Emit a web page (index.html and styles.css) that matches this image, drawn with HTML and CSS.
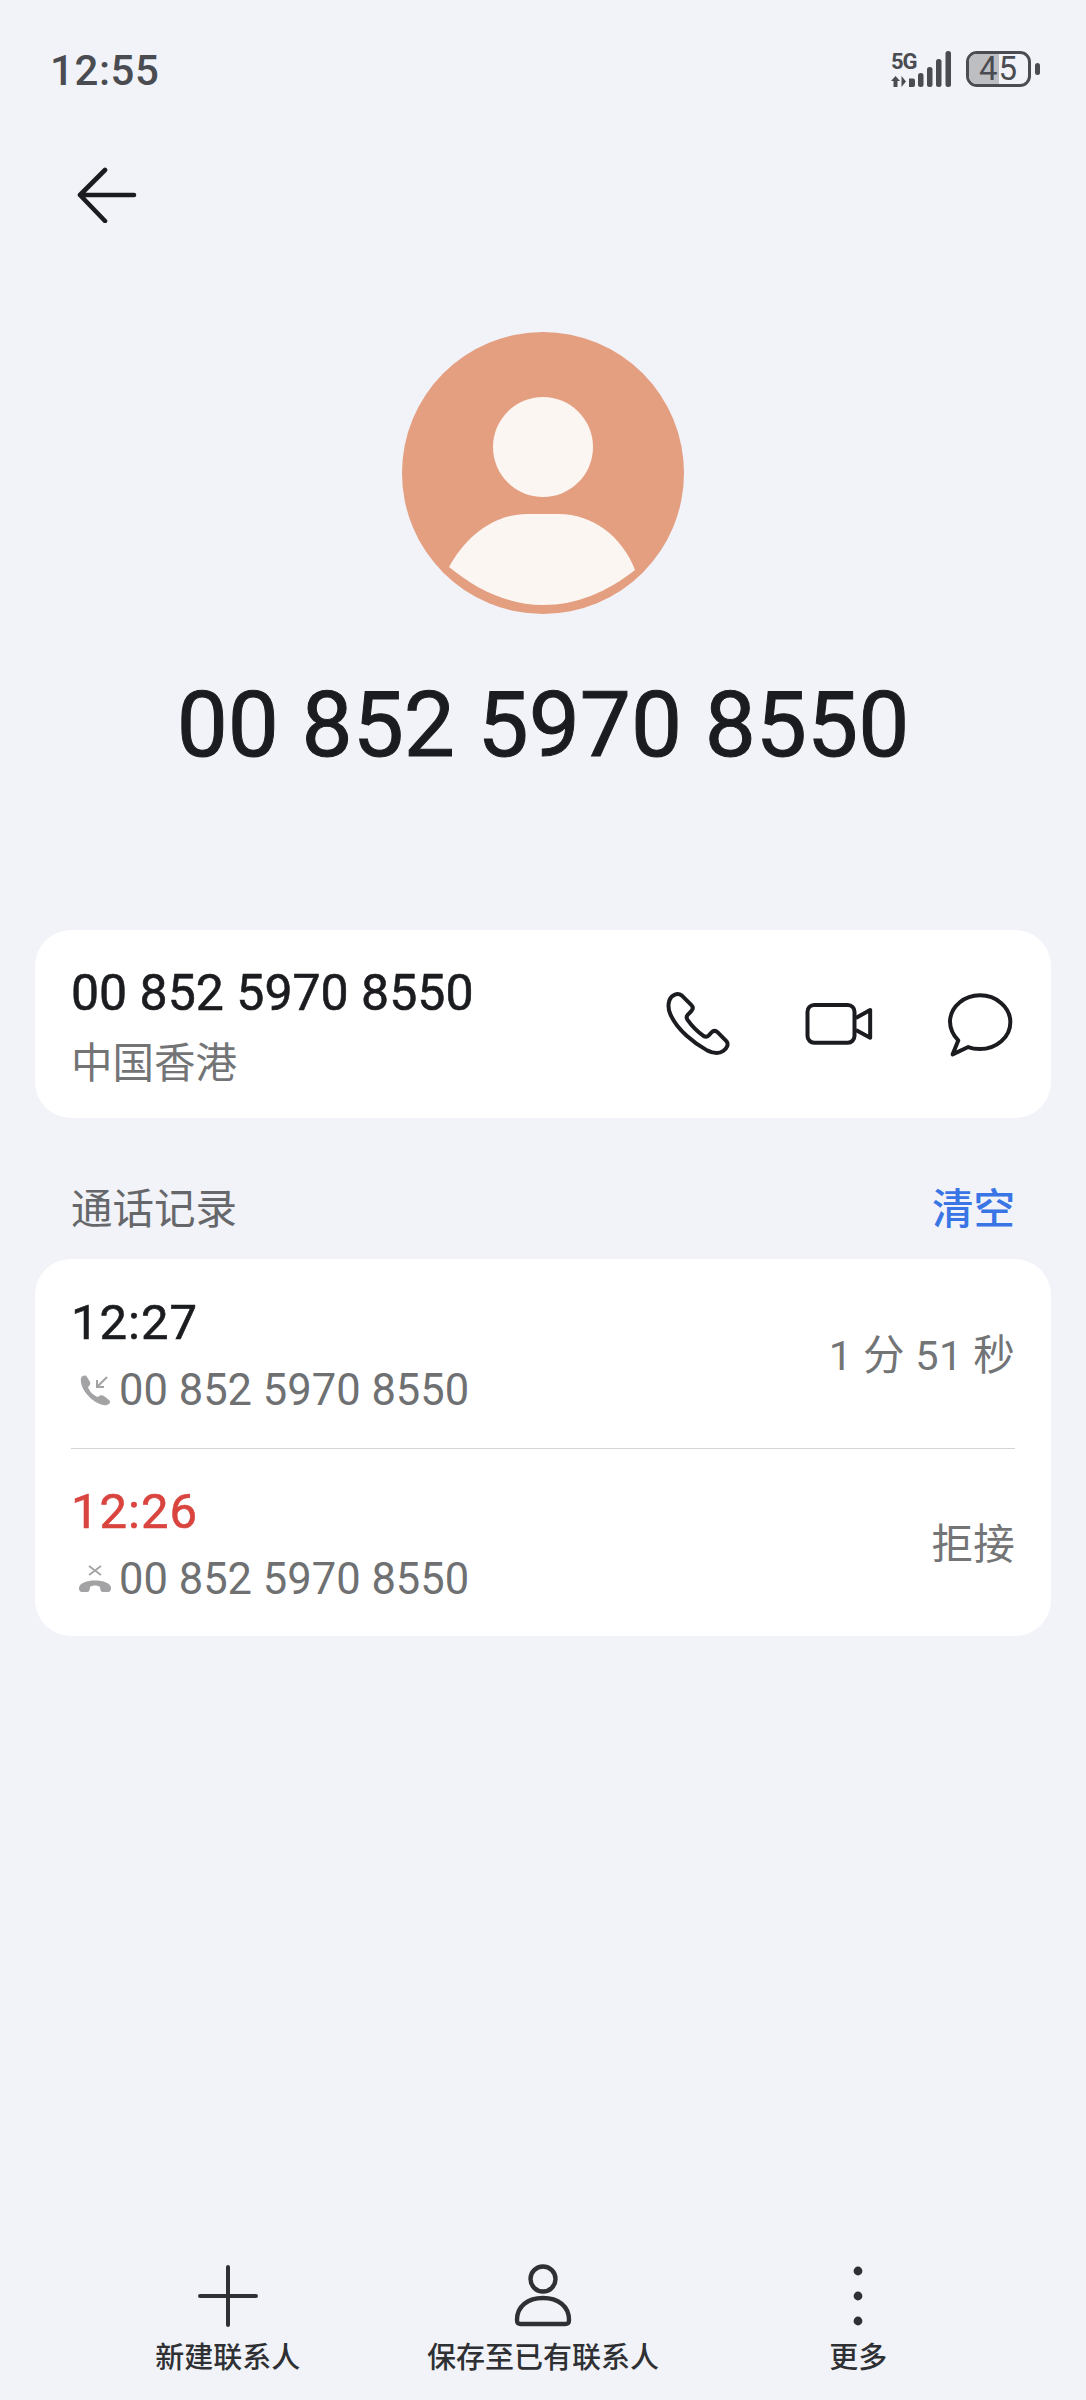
FILE: index.html
```html
<!DOCTYPE html>
<html lang="zh-CN">
<head>
<meta charset="utf-8">
<title>通话详情</title>
<link rel="stylesheet" href="styles.css">
</head>
<body>
<div class="page">
  <div class="status">
    <span class="clock">12:55</span>
    <div class="status-icons">
      <div class="net">
        <span class="net-label">5G</span>
        <svg class="net-arrows" viewBox="0 0 24 11"><path d="M4.5 0 L9 5 H6.5 V11 H2.5 V5 H0Z M10.5 0 L15 5.5 L10.5 11Z M18 2.5 h4 q2 0 2 2 v4.5 q0 2 -2 2 h-4z" fill="#4a4c51"/></svg>
      </div>
      <svg class="bars" viewBox="0 0 33 36"><g fill="#4a4c51"><rect x="0" y="22" width="5.5" height="14" rx="2.5"/><rect x="9" y="16" width="5.5" height="20" rx="2.5"/><rect x="18" y="8" width="5.5" height="28" rx="2.5"/><rect x="27.5" y="0" width="5.5" height="36" rx="2.5"/></g></svg>
      <div class="battery"><span class="battery-level"></span><span class="battery-text">45</span></div>
      <span class="battery-cap"></span>
    </div>
  </div>

  <div class="nav">
    <svg class="back" viewBox="0 0 60 56" fill="none" stroke="#1b1c1f" stroke-width="4.6" stroke-linecap="round" stroke-linejoin="round"><path d="M28 3 L3 28 L28 54 M3 28 H57"/></svg>
  </div>

  <div class="hero">
    <svg class="avatar" viewBox="0 0 282 282">
      <circle cx="141" cy="141" r="141" fill="#e49e80"/>
      <circle cx="141" cy="115" r="50" fill="#fbf6f2"/>
      <path d="M47 235 C64 204 92 182 125 182 H157 C190 182 220 204 233 238 C205 260 175 273 141 273 C107 273 75 258 47 235Z" fill="#fbf6f2"/>
    </svg>
    <h1 class="title">00 852 5970 8550</h1>
  </div>

  <section class="card contact">
    <div class="contact-text">
      <div class="contact-number">00 852 5970 8550</div>
      <div class="contact-region">中国香港</div>
    </div>
    <div class="actions">
      <svg class="act act-phone" viewBox="70 90 205 205" fill="none" stroke="#1b1c1f" stroke-width="12" stroke-linejoin="round"><path d="M86 122 C92 103 112 97 124 107 L152 135 C158 141 158 148 152 154 L142 164 C137 169 137 174 141 180 C155 200 170 215 190 229 C196 232 200 232 205 227 L213 218 C219 212 226 212 232 218 L258 244 C266 254 260 266 248 274 C235 284 220 282 200 272 C160 250 110 210 90 165 C83 150 82 135 86 122Z"/></svg>
      <svg class="act act-video" viewBox="490 124 215 138" fill="none" stroke="#1b1c1f" stroke-width="12" stroke-linejoin="round"><rect x="503" y="136" width="141" height="113" rx="20"/><path d="M648 175 L691 151 V234 L648 211"/></svg>
      <svg class="act act-chat" viewBox="918 92 205 200" fill="none" stroke="#1b1c1f" stroke-width="12" stroke-linejoin="round"><path d="M955 240 C938 222 930 200 930 182 C932 136 975 104 1020 104 C1070 104 1112 140 1112 185 C1112 230 1070 266 1020 266 C1005 266 995 264 985 260 L938 282 Z"/></svg>
    </div>
  </section>

  <div class="log-head">
    <span class="log-title">通话记录</span>
    <span class="log-clear">清空</span>
  </div>

  <section class="card log">
    <div class="row">
      <div class="row-main">
        <div class="row-time">12:27</div>
        <div class="row-line">
          <svg class="call-icon" viewBox="0 0 32 31"><path d="M2 3 C4 0 7 0 8 2 L11 7 C12 9 10 11 9 12 C10 16 15 21 19 22 C21 20 23 20 25 21 L30 25 C32 27 31 29 28 30 C18 32 0 16 2 3Z" fill="#a3a3a5"/><path d="M28 2 L18 12 M18 5 V12 H25" fill="none" stroke="#a3a3a5" stroke-width="2"/></svg>
          <span class="row-number">00 852 5970 8550</span>
        </div>
      </div>
      <span class="row-note">1 分 51 秒</span>
    </div>
    <div class="row">
      <div class="row-main">
        <div class="row-time missed">12:26</div>
        <div class="row-line">
          <svg class="call-icon" viewBox="0 0 32 31"><path d="M10 2 L22 11 M22 2 L10 11" fill="none" stroke="#a3a3a5" stroke-width="1.8"/><path d="M0 24 C0 14 32 14 32 24 C32 28 30 28 28 28 L24 28 C22 28 21 26 21 23 C18 21 14 21 11 23 C11 26 10 28 8 28 L4 28 C2 28 0 28 0 24Z" fill="#a3a3a5"/></svg>
          <span class="row-number">00 852 5970 8550</span>
        </div>
      </div>
      <span class="row-note">拒接</span>
    </div>
  </section>

  <nav class="toolbar">
    <div class="tool">
      <svg class="tool-icon" viewBox="0 0 64 64" fill="none" stroke="#2f3034" stroke-width="4" stroke-linecap="round"><path d="M32 3 V61 M4 32 H60"/></svg>
      <span class="tool-label">新建联系人</span>
    </div>
    <div class="tool">
      <svg class="tool-icon" viewBox="0 0 64 64" fill="none" stroke="#2f3034" stroke-width="4.4" stroke-linejoin="round"><circle cx="32" cy="15" r="12.5"/><path d="M6 56 C6 42 17 34 32 34 C47 34 58 42 58 56 C58 59 57 60 54 60 H10 C7 60 6 59 6 56Z"/></svg>
      <span class="tool-label">保存至已有联系人</span>
    </div>
    <div class="tool">
      <svg class="tool-icon" viewBox="0 0 64 64" fill="#2f3034"><circle cx="32" cy="7" r="4.4"/><circle cx="32" cy="32" r="4.4"/><circle cx="32" cy="57" r="4.4"/></svg>
      <span class="tool-label">更多</span>
    </div>
  </nav>
</div>
</body>
</html>
```
FILE: styles.css
```css
* { box-sizing: border-box; }

html, body { margin: 0; padding: 0; }

body {
  background: #f1f3f8;
  font-family: Roboto, "Noto Sans CJK SC", sans-serif;
  color: #1b1c1f;
}

.page {
  display: flex;
  flex-direction: column;
  height: 2400px;
  overflow: hidden;
}

/* status bar */
.status {
  display: flex;
  justify-content: space-between;
  align-items: center;
  height: 140px;
  padding: 0 46px 0 50px;
}

.clock {
  font-size: 42px;
  font-weight: 500;
  color: #4a4c51;
  letter-spacing: 0.6px;
}

.status-icons {
  display: flex;
  align-items: center;
  margin-bottom: 2px;
}

.net {
  display: flex;
  flex-direction: column;
  width: 24px;
  margin-right: 3px;
}

.net-label {
  font-size: 22px;
  line-height: 21px;
  font-weight: 700;
  color: #4a4c51;
  letter-spacing: -1px;
}

.net-arrows { width: 24px; height: 11px; margin-top: 4px; display: block; }

.bars { width: 33px; height: 36px; margin-right: 15px; }

.battery {
  position: relative;
  width: 65px;
  height: 36px;
  border: 3px solid #4a4c51;
  border-radius: 11px;
  display: flex;
  align-items: center;
  justify-content: center;
}

.battery-level {
  position: absolute;
  left: 0;
  top: 0;
  bottom: 0;
  width: 50%;
  border-radius: 8px 0 0 8px;
  background: #bdbec2;
}

.battery-text {
  position: relative;
  font-size: 33px;
  line-height: 30px;
  letter-spacing: 1px;
  color: #4a4c51;
}

.battery-cap {
  width: 5px;
  height: 12px;
  margin-left: 4px;
  border-radius: 3px;
  background: #4a4c51;
}

/* header */
.nav {
  height: 110px;
  padding-left: 77px;
  display: flex;
  align-items: center;
}

.back { width: 60px; height: 56px; }

/* avatar and title */
.hero {
  display: flex;
  flex-direction: column;
  align-items: center;
  padding-top: 82px;
}

.avatar { width: 282px; height: 282px; display: block; }

.title {
  margin: 58px 0 0;
  font-size: 91px;
  line-height: 106px;
  font-weight: 400;
  -webkit-text-stroke: 1px #1b1c1f;
  color: #1b1c1f;
}

/* cards */
.card {
  margin: 0 35px;
  background: #fff;
  border-radius: 36px;
}

.contact {
  margin-top: 152px;
  height: 188px;
  padding: 0 36px;
  display: flex;
  align-items: center;
  justify-content: space-between;
}

.contact-text { margin-top: 8px; }

.contact-number {
  font-size: 50px;
  line-height: 62px;
  font-weight: 400;
  -webkit-text-stroke: 0.6px #1b1c1f;
}

.contact-region {
  margin-top: 10px;
  font-size: 41.5px;
  line-height: 60px;
  color: #737476;
}

.actions {
  display: flex;
  align-items: center;
  padding-right: 1px;
}

.act { display: block; }
.act-phone { width: 68px; height: 68px; margin-right: 71px; }
.act-video { width: 72px; height: 46px; margin-right: 71px; }
.act-chat { width: 68px; height: 67px; }

/* call log */
.log-head {
  display: flex;
  justify-content: space-between;
  align-items: center;
  height: 141px;
  padding: 34px 71px 0;
  font-size: 41.5px;
}

.log-title { color: #66676a; }
.log-clear { color: #3a75e6; font-weight: 500; }

.row {
  height: 188.5px;
  margin: 0 36px;
  display: flex;
  justify-content: space-between;
  align-items: center;
}

.row + .row { border-top: 1.5px solid #d4d4d6; }

.row-main { margin-top: 7px; }

.row-time {
  font-size: 49px;
  line-height: 62px;
  font-weight: 400;
  letter-spacing: 1px;
  -webkit-text-stroke: 0.6px #1b1c1f;
  color: #1b1c1f;
}

.row-time.missed {
  color: #d9443f;
  -webkit-text-stroke-color: #d9443f;
}

.row-line {
  display: flex;
  align-items: center;
  margin-top: 6px;
}

.call-icon { width: 32px; height: 31px; margin: 0 8px 0 8px; }

.row-number {
  font-size: 43.5px;
  line-height: 62px;
  color: #6f7072;
}

.row-note {
  font-size: 41.5px;
  letter-spacing: 0.3px;
  color: #737476;
  margin-bottom: 3px;
}

/* bottom toolbar */
.toolbar {
  margin-top: auto;
  height: 114px;
  margin-bottom: 22px;
  padding: 0 70px;
  display: grid;
  grid-template-columns: repeat(3, 1fr);
}

.tool {
  display: flex;
  flex-direction: column;
  align-items: center;
}

.tool-icon { width: 64px; height: 64px; display: block; }

.tool-label {
  margin-top: 10px;
  font-size: 29px;
  line-height: 40px;
  font-weight: 500;
  color: #2f3034;
  white-space: nowrap;
}
```
